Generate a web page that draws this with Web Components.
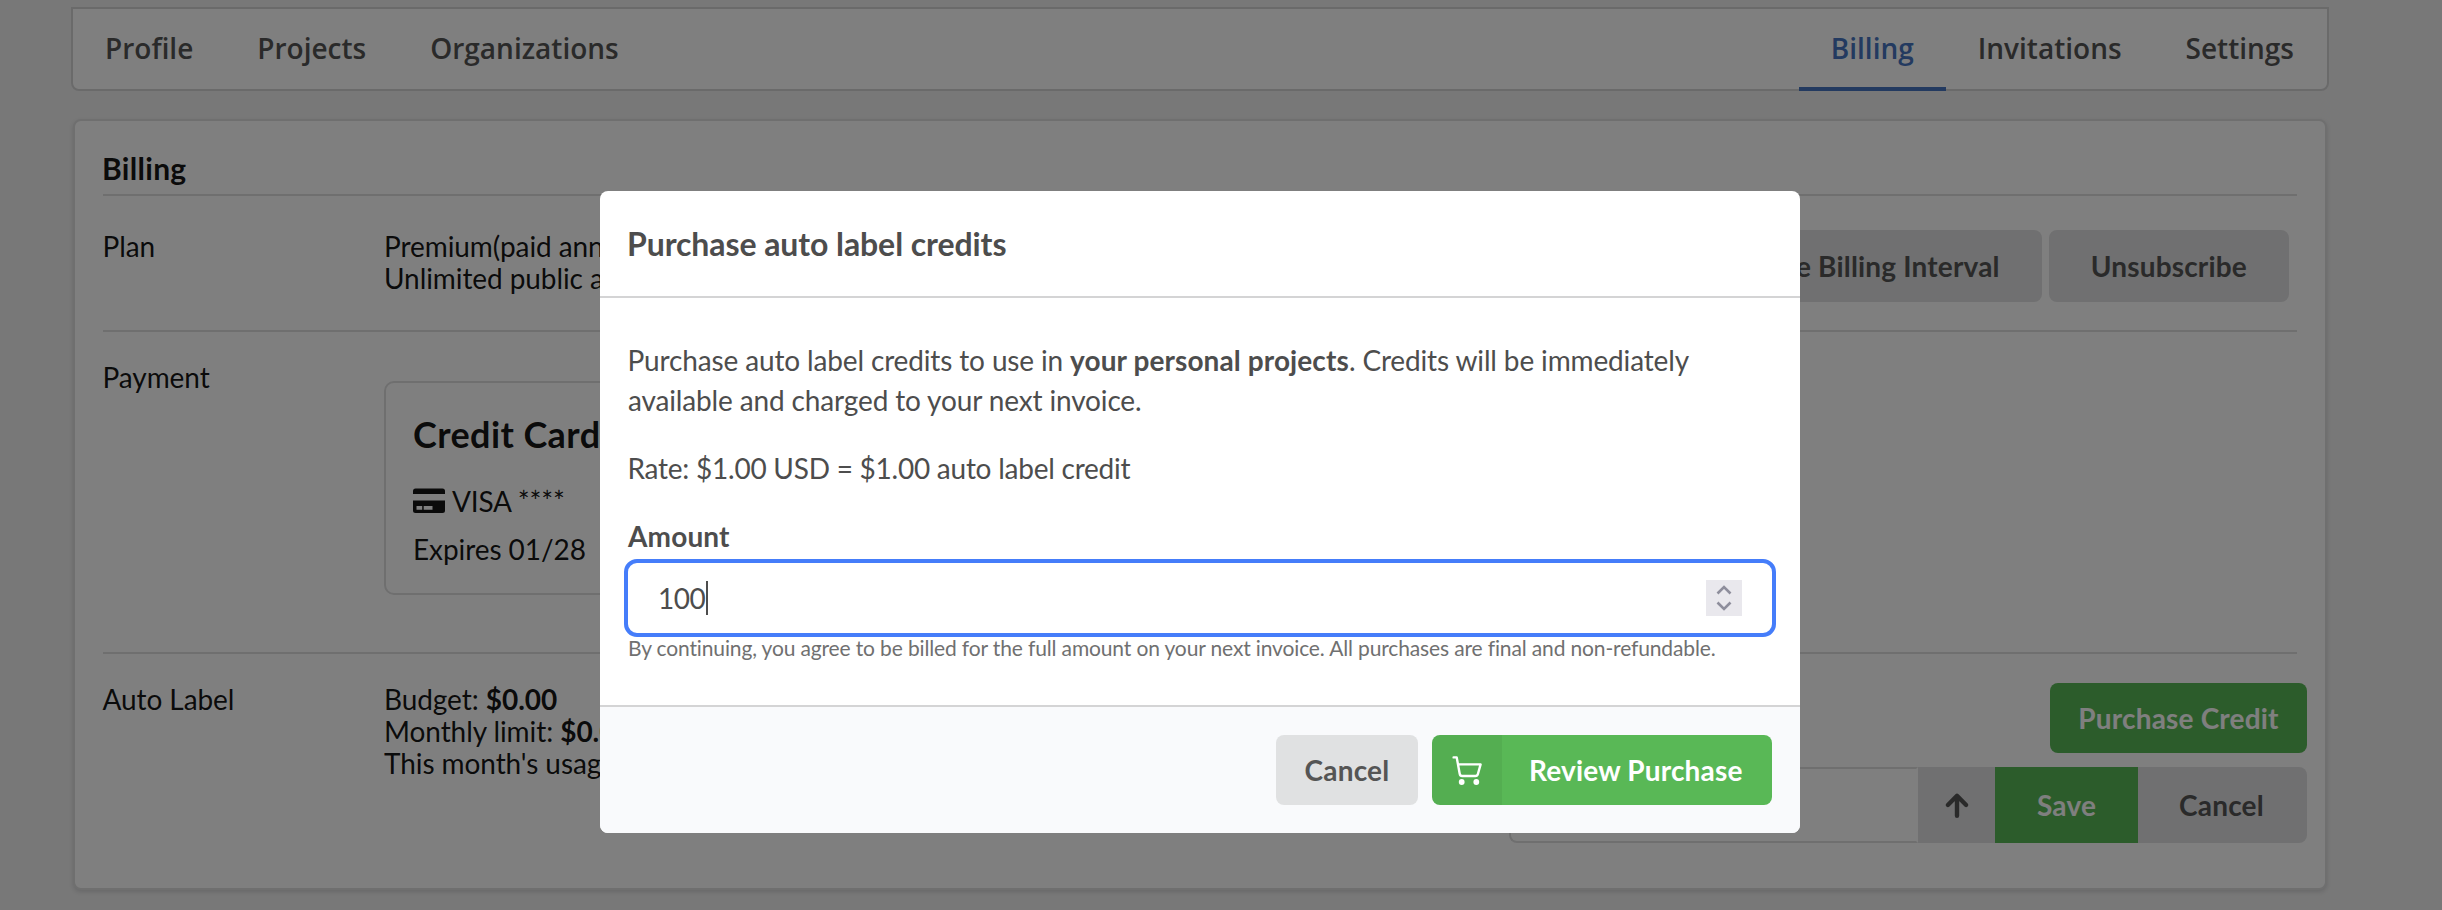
<!DOCTYPE html>
<html lang="en">
<head>
<meta charset="utf-8">
<title>Billing</title>
<style>
  body {
    margin: 0;
    height: 910px;
    overflow: hidden;
    background: #f0f0f0;
    font: 28px/32px Lato, "Liberation Sans", sans-serif;
    letter-spacing: -.08px;
    color: rgba(0, 0, 0, .92);
  }
  b { letter-spacing: 0; }
</style>
</head>
<body>

<account-page>
  <nav-tabs slot="nav">
    <nav-tab>Profile</nav-tab>
    <nav-tab>Projects</nav-tab>
    <nav-tab>Organizations</nav-tab>
    <nav-tab slot="right" active>Billing</nav-tab>
    <nav-tab slot="right">Invitations</nav-tab>
    <nav-tab slot="right">Settings</nav-tab>
  </nav-tabs>

  <billing-panel heading="Billing">
    <billing-row label="Plan" class="plan">
      <div>Premium(paid annually)</div>
      <div>Unlimited public and private projects</div>
      <ui-button slot="actions">Change Billing Interval</ui-button>
      <ui-button slot="actions">Unsubscribe</ui-button>
    </billing-row>
    <billing-row label="Payment" class="payment">
      <credit-card brand="VISA ****" expires="Expires 01/28"></credit-card>
    </billing-row>
    <billing-row label="Auto Label" class="auto">
      <div>Budget: <b>$0.00</b></div>
      <div>Monthly limit: <b>$0.00</b></div>
      <div>This month's usage: <b>$0.00</b></div>
      <limit-editor slot="actions"></limit-editor>
    </billing-row>
  </billing-panel>
</account-page>

<modal-dialog>
  <span slot="title">Purchase auto label credits</span>
  <purchase-form></purchase-form>
  <ui-button slot="footer" class="cancel">Cancel</ui-button>
  <ui-button slot="footer" kind="primary" labeled class="review">
    <svg slot="icon" width="34" height="38" viewBox="0 0 34 38" fill="none" stroke="#fff" stroke-width="2.4" stroke-linecap="round" stroke-linejoin="round">
      <path d="M3.600 6.400H6.700L9.700 22.800Q10.100 25 12.200 25H25.400Q27.400 25 27.900 23L30.600 13.400H8.200"/>
      <circle cx="11.700" cy="31" r="2.900" fill="#fff" stroke="none"/>
      <circle cx="26.300" cy="31" r="2.900" fill="#fff" stroke="none"/>
    </svg>
    Review Purchase
  </ui-button>
</modal-dialog>

<script>
class BaseElement extends HTMLElement {
  constructor() {
    super();
    this.attachShadow({ mode: 'open' });
  }

  connectedCallback() {
    this.shadowRoot.innerHTML = this.render();
  }

  attr(name) {
    return this.getAttribute(name) || '';
  }
}

customElements.define('account-page', class extends BaseElement {
  render() {
    return `
      <style>
        :host {
          display: flex;
          flex-direction: column;
          gap: 28px;
          padding: 7px 113px 0 71px;
        }
        .content { margin: 0 2px; }
      </style>
      <slot name="nav"></slot>
      <div class="content"><slot></slot></div>
    `;
  }
});

customElements.define('nav-tabs', class extends BaseElement {
  render() {
    return `
      <style>
        :host {
          display: flex;
          justify-content: space-between;
          box-sizing: border-box;
          height: 84px;
          padding-right: 1px;
          border: 2px solid #d4d4d5;
          border-radius: 0 0 8px 8px;
          background: #fff;
        }
        div { display: flex; }
      </style>
      <div><slot></slot></div>
      <div><slot name="right"></slot></div>
    `;
  }
});

customElements.define('nav-tab', class extends BaseElement {
  render() {
    return `
      <style>
        :host {
          display: flex;
          align-items: center;
          box-sizing: border-box;
          height: 82px;
          padding: 0 32px;
          border-bottom: 4px solid transparent;
          font-family: "Open Sans", "Liberation Sans", sans-serif;
          font-weight: 600;
          letter-spacing: 0;
          color: #555;
        }
        :host([active]) {
          color: #4674c0;
          border-color: #4674c0;
        }
      </style>
      <slot></slot>
    `;
  }
});

customElements.define('billing-panel', class extends BaseElement {
  render() {
    return `
      <style>
        :host {
          display: block;
          box-sizing: border-box;
          height: 771px;
          padding: 29px 28px 0;
          border: 2px solid #dededf;
          border-radius: 8px;
          background: #fff;
          box-shadow: 0 2px 4px rgba(34, 36, 38, .15);
        }
        h3 {
          margin: 0;
          height: 44px;
          border-bottom: 2px solid #dededf;
          font-size: 30px;
          line-height: 36px;
          letter-spacing: .3px;
          text-indent: -1px;
        }
      </style>
      <h3>${this.attr('heading')}</h3>
      <slot></slot>
    `;
  }
});

customElements.define('billing-row', class extends BaseElement {
  render() {
    return `
      <style>
        :host {
          display: flex;
          box-sizing: border-box;
          padding-top: 29px;
        }
        :host(.plan) { height: 136px; padding-top: 34px; border-bottom: 2px solid #dededf; }
        :host(.payment) { height: 322px; border-bottom: 2px solid #dededf; }
        .label { flex: none; width: 281px; text-indent: -.5px; }
        .value { flex: 1; white-space: nowrap; }
        .actions { display: flex; gap: 7px; align-items: flex-start; margin-right: 8px; }
        :host(.auto) .actions { margin-right: -10px; }
      </style>
      <div class="label">${this.attr('label')}</div>
      <div class="value"><slot></slot></div>
      <div class="actions"><slot name="actions"></slot></div>
    `;
  }
});

customElements.define('ui-button', class extends BaseElement {
  render() {
    return `
      <style>
        :host {
          display: inline-flex;
          align-items: center;
          justify-content: center;
          box-sizing: border-box;
          height: 72px;
          padding: 0 42px;
          border-radius: 8px;
          background: #e0e1e2;
          color: #555;
          font-weight: 700;
          letter-spacing: .18px;
          white-space: nowrap;
          overflow: hidden;
        }
        :host([kind=primary]) { background: #59b856; color: #fff; }
        :host([labeled]) { padding: 0; justify-content: flex-start; }
        .icon { display: none; }
        :host([labeled]) .icon {
          display: flex;
          align-items: center;
          justify-content: center;
          width: 70px;
          height: 100%;
          margin-right: 27px;
          background: rgba(0, 0, 0, .05);
        }
        :host(.cancel) { width: 142px; height: 70px; padding: 0; }
        :host(.review) { width: 340px; height: 70px; }
      </style>
      <span class="icon"><slot name="icon"></slot></span>
      <span><slot></slot></span>
    `;
  }
});

customElements.define('credit-card', class extends BaseElement {
  render() {
    return `
      <style>
        :host {
          display: block;
          box-sizing: border-box;
          width: 580px;
          height: 214px;
          margin-top: 20px;
          padding: 28px 28px 0 27px;
          border: 2px solid #dededf;
          border-radius: 10px;
        }
        h2 { margin: 0; font-size: 36px; line-height: 46px; letter-spacing: .4px; }
        .brand { display: flex; align-items: center; gap: 7px; margin-top: 28px; letter-spacing: -.2px; }
        .expires { margin-top: 16px; }
      </style>
      <h2>Credit Card</h2>
      <div class="brand">
        <svg width="32" height="26" viewBox="0 0 32 26" fill="currentColor">
          <path d="M0 6V3Q0 .5 2.500 .5H29.500Q32 .5 32 3V6Z"/>
          <path fill-rule="evenodd" d="M0 12.500H32V22.500Q32 25 29.500 25H2.500Q0 25 0 22.500ZM3.500 18V21.800H9.200V18ZM10.700 18V21.800H19.500V18Z"/>
        </svg>
        <span>${this.attr('brand')}</span>
      </div>
      <div class="expires">${this.attr('expires')}</div>
    `;
  }
});

customElements.define('limit-editor', class extends BaseElement {
  render() {
    return `
      <style>
        :host { display: flex; flex-direction: column; align-items: flex-end; gap: 14px; }
        .credit { width: 257px; height: 70px; padding: 0; }
        .group { display: flex; height: 76px; width: 798px; }
        .input {
          flex: 1;
          border: 2px solid #dededf;
          border-right-color: transparent;
          border-radius: 8px 0 0 8px;
        }
        .group ui-button { height: 76px; padding: 0; border-radius: 0; }
        .arrow { width: 77px; }
        .save { width: 143px; }
        .group .discard { width: 169px; padding-right: 2px; border-radius: 0 8px 8px 0; }
        svg { display: block; }
      </style>
      <ui-button kind="primary" class="credit">Purchase Credit</ui-button>
      <div class="group">
        <div class="input"></div>
        <ui-button class="arrow">
          <svg width="26" height="28" viewBox="0 0 26 28" fill="none" stroke="#555" stroke-width="4.400" stroke-linecap="round" stroke-linejoin="round">
            <path d="M13 24.800V5M3.900 14 13 4.800 22.100 14"/>
          </svg>
        </ui-button>
        <ui-button class="save" kind="primary">Save</ui-button>
        <ui-button class="discard">Cancel</ui-button>
      </div>
    `;
  }
});

customElements.define('modal-dialog', class extends BaseElement {
  render() {
    return `
      <style>
        :host {
          position: absolute;
          inset: 0;
          background: rgba(0, 0, 0, .5);
          color: #4d4d4d;
        }
        .dialog {
          display: flex;
          flex-direction: column;
          width: 1200px;
          height: 642px;
          margin: 191px 0 0 600px;
          border-radius: 8px;
          background: #fff;
          overflow: hidden;
        }
        header {
          box-sizing: border-box;
          height: 107px;
          padding: 33px 27px 0;
          border-bottom: 2px solid #d4d4d5;
          font-size: 32px;
          font-weight: 700;
          line-height: 40px;
        }
        main { flex: 1; padding: 0 28px; }
        footer {
          box-sizing: border-box;
          height: 128px;
          display: flex;
          justify-content: flex-end;
          gap: 14px;
          padding: 28px 28px 0;
          border-top: 2px solid #d4d4d5;
          background: #f9fafc;
        }
      </style>
      <div class="dialog">
        <header><slot name="title"></slot></header>
        <main><slot></slot></main>
        <footer><slot name="footer"></slot></footer>
      </div>
    `;
  }
});

customElements.define('purchase-form', class extends BaseElement {
  render() {
    return `
      <style>
        :host { display: block; padding-top: 42px; line-height: 40px; }
        p { margin: 0 0 28px; text-indent: -.5px; letter-spacing: -.14px; }
        b { letter-spacing: .1px; }
        .rate { letter-spacing: -.24px; }
        label { display: block; font-weight: 700; letter-spacing: .15px; }
        small {
          display: block;
          margin-top: -2px;
          font-size: 21px;
          line-height: 26px;
          letter-spacing: -.14px;
          white-space: nowrap;
          color: #707070;
        }
      </style>
      <p>Purchase auto label credits to use in <b>your personal projects</b>. Credits will be immediately<br>available and charged to your next invoice.</p>
      <p class="rate">Rate: $1.00 USD = $1.00 auto label credit</p>
      <label>Amount</label>
      <number-field value="100"></number-field>
      <small>By continuing, you agree to be billed for the full amount on your next invoice. All purchases are final and non-refundable.</small>
    `;
  }
});

customElements.define('number-field', class extends BaseElement {
  render() {
    return `
      <style>
        :host {
          display: flex;
          align-items: center;
          box-sizing: border-box;
          height: 78px;
          margin: 3px -4px 0;
          padding: 0 30px;
          border: 4px solid #457dfa;
          border-radius: 13px;
          letter-spacing: -.5px;
        }
        .caret { width: 2px; height: 34px; margin-left: 1px; background: #4d4d4d; }
        .spin { width: 36px; height: 36px; margin-left: auto; background: #e9e8ed; }
        svg { display: block; }
      </style>
      <span>${this.attr('value')}</span>
      <span class="caret"></span>
      <span class="spin">
        <svg width="36" height="36" viewBox="0 0 36 36" fill="none" stroke="#8e8e9c" stroke-width="2.600">
          <path d="M11.500 13.500 18 7 24.500 13.500M11.500 22.500 18 29 24.500 22.500"/>
        </svg>
      </span>
    `;
  }
});
</script>
</body>
</html>
